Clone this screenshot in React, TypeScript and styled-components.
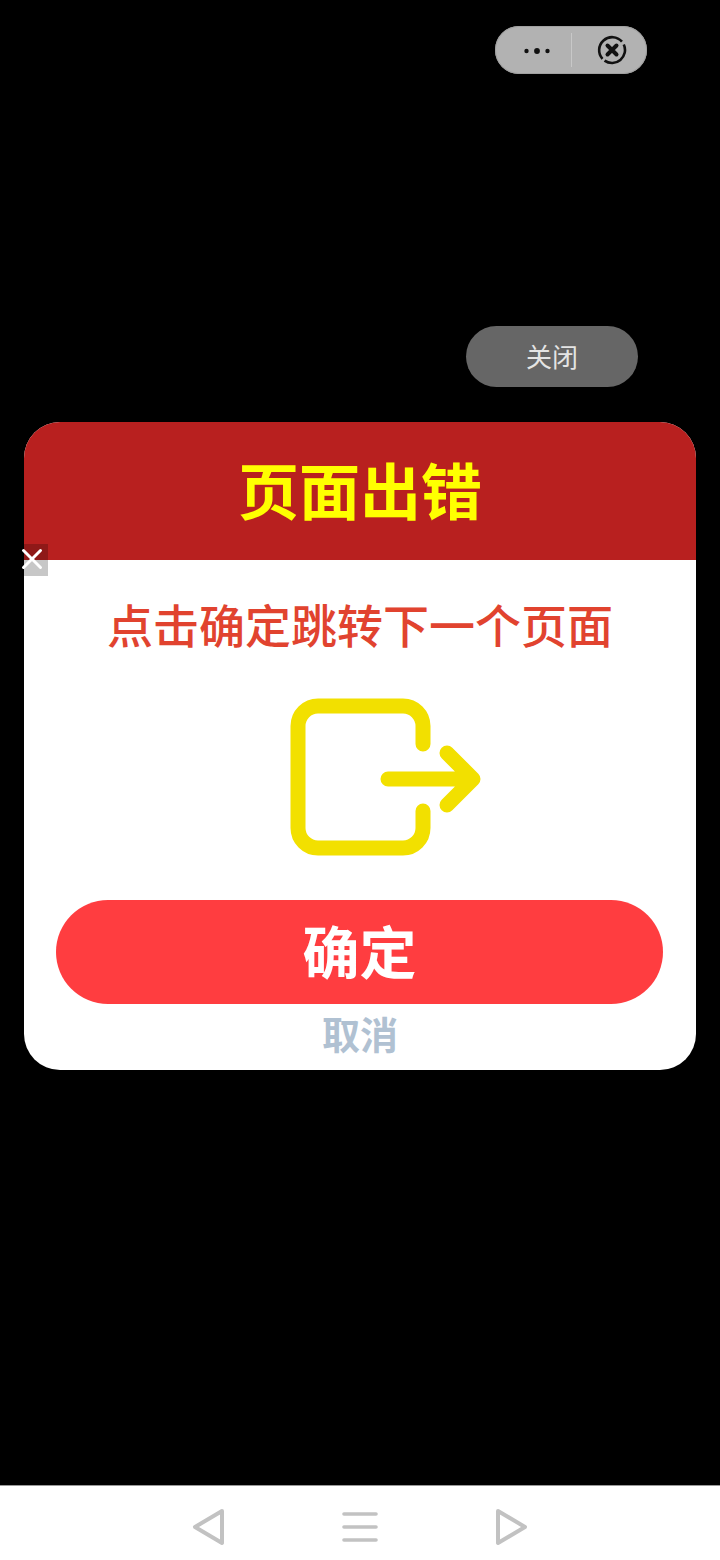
import React from "react";
import styled, { createGlobalStyle } from "styled-components";

const Global = createGlobalStyle`
  html, body { margin: 0; padding: 0; background: #000; }
  body { font-family: "Noto Sans CJK SC", "Noto Sans", sans-serif; }
`;

const Page = styled.div`
  width: 720px;
  height: 1560px;
  background: #000;
  display: flex;
  flex-direction: column;
  overflow: hidden;
`;

const Main = styled.main`
  flex: 1;
  display: flex;
  flex-direction: column;
  padding-top: 26px;
`;

const CapsuleRow = styled.div`
  display: flex;
  justify-content: flex-end;
  padding-right: 73px;
`;

const Capsule = styled.div`
  width: 152px;
  height: 48px;
  border-radius: 24px;
  background: #b2b2b2;
  box-shadow: inset 0 0 0 1px #a0a0a0;
  display: flex;
  align-items: center;
`;

const CapsuleSlot = styled.div<{ $w: number; $shift: number }>`
  width: ${(p) => p.$w}px;
  box-sizing: border-box;
  padding-left: ${(p) => p.$shift}px;
  display: flex;
  align-items: center;
  justify-content: center;
`;

const CapsuleDivider = styled.div`
  width: 1px;
  height: 34px;
  background: #c8c8c8;
`;

const CloseRow = styled.div`
  display: flex;
  justify-content: flex-end;
  padding-right: 82px;
  margin-top: 252px;
`;

const ClosePill = styled.button`
  width: 172px;
  height: 61px;
  border: 0;
  border-radius: 31px;
  background: #666;
  color: #e4e4e4;
  font: 400 26px/57px "Noto Sans CJK SC", sans-serif;
  padding: 0 0 2px;
`;

const Card = styled.section`
  position: relative;
  margin: 35px 24px 0;
  width: 672px;
  height: 648px;
  border-radius: 36px;
  background: #fff;
  display: flex;
  flex-direction: column;
  align-items: center;
`;

const CardHeader = styled.header`
  width: 100%;
  height: 138px;
  background: #b8201f;
  border-radius: 36px 36px 0 0;
  color: #ffff00;
  font-size: 61px;
  font-weight: 700;
  line-height: 134px;
  text-align: center;
`;

const Badge = styled.div`
  position: absolute;
  left: 0;
  top: 122px;
  width: 24px;
  height: 32px;
  background: rgba(0, 0, 0, 0.22);
`;

const BadgeCross = styled.svg`
  position: absolute;
  left: -3px;
  top: 4px;
`;

const Subtitle = styled.div`
  margin-top: 30px;
  color: #e1432f;
  font-size: 46px;
  font-weight: 500;
  line-height: 66px;
`;

const ExitIcon = styled.svg`
  display: block;
  margin-top: 42px;
  margin-left: 52px;
`;

const Confirm = styled.button`
  margin-top: 44px;
  margin-right: 1px;
  width: 607px;
  height: 104px;
  border: 0;
  border-radius: 52px;
  background: #ff3d40;
  color: #fff;
  font: 700 57px/96px "Noto Sans CJK SC", sans-serif;
  padding: 0 0 6px;
`;

const Cancel = styled.div`
  margin-top: 5px;
  color: #b0c1d2;
  font-size: 38px;
  font-weight: 700;
  line-height: 48px;
`;

const BottomNav = styled.nav`
  height: 75px;
  background: #fff;
  border-top: 1px solid #999;
  display: flex;
  align-items: center;
  box-sizing: border-box;
  padding: 7px 0 0 191px;
  gap: 117px;
`;

export default function App() {
  return (
    <Page>
      <Global />
      <Main>
        <CapsuleRow>
          <Capsule>
            <CapsuleSlot $w={76} $shift={7}>
              <svg width="30" height="10" viewBox="0 0 30 10">
                <circle cx="4.5" cy="6" r="2.2" fill="#111" />
                <circle cx="15" cy="6" r="2.9" fill="#111" />
                <circle cx="25.5" cy="6" r="2.2" fill="#111" />
              </svg>
            </CapsuleSlot>
            <CapsuleDivider />
            <CapsuleSlot $w={75} $shift={5}>
              <svg width="30" height="30" viewBox="0 0 30 30" fill="none" stroke="#111">
                <path d="M 26.78 9.51 A 13 13 0 0 1 7.54 25.65" strokeWidth="2.6" />
                <path d="M 5.49 23.87 A 13 13 0 1 1 24.96 6.64" strokeWidth="2.6" />
                <path d="M10.5 10.5 L19.5 19.5 M19.5 10.5 L10.5 19.5" strokeWidth="4" strokeLinecap="round" />
              </svg>
            </CapsuleSlot>
          </Capsule>
        </CapsuleRow>
        <CloseRow>
          <ClosePill>关闭</ClosePill>
        </CloseRow>
        <Card>
          <CardHeader>页面出错</CardHeader>
          <Badge>
            <BadgeCross width="22" height="22" viewBox="0 0 22 22" fill="none" stroke="#fff" strokeWidth="3" strokeLinecap="round">
              <path d="M2.5 2.5 L19.5 19.5 M19.5 2.5 L2.5 19.5" />
            </BadgeCross>
          </Badge>
          <Subtitle>点击确定跳转下一个页面</Subtitle>
          <ExitIcon width="192" height="158" viewBox="0 0 192 158" fill="none" stroke="#f2e000" strokeWidth="15" strokeLinecap="round" strokeLinejoin="round">
            <path d="M133 46 V28 A20 20 0 0 0 113 8 H28 A20 20 0 0 0 8 28 V130 A20 20 0 0 0 28 150 H113 A20 20 0 0 0 133 130 V113" />
            <path d="M98 81 H183 M157 55 L183 81 L157 107" />
          </ExitIcon>
          <Confirm>确定</Confirm>
          <Cancel>取消</Cancel>
        </Card>
      </Main>
      <BottomNav>
        <svg width="34" height="38" viewBox="0 0 34 38" fill="none" stroke="#c2c2c2" strokeWidth="4" strokeLinejoin="round">
          <path d="M31 3 L4 19 L31 35 Z" />
        </svg>
        <svg width="36" height="32" viewBox="0 0 36 32" fill="none" stroke="#c2c2c2" strokeWidth="3.6" strokeLinecap="round">
          <path d="M2 3 H34 M2 16 H34 M2 29 H34" />
        </svg>
        <svg width="34" height="38" viewBox="0 0 34 38" fill="none" stroke="#c2c2c2" strokeWidth="4" strokeLinejoin="round">
          <path d="M3 3 L30 19 L3 35 Z" />
        </svg>
      </BottomNav>
    </Page>
  );
}
